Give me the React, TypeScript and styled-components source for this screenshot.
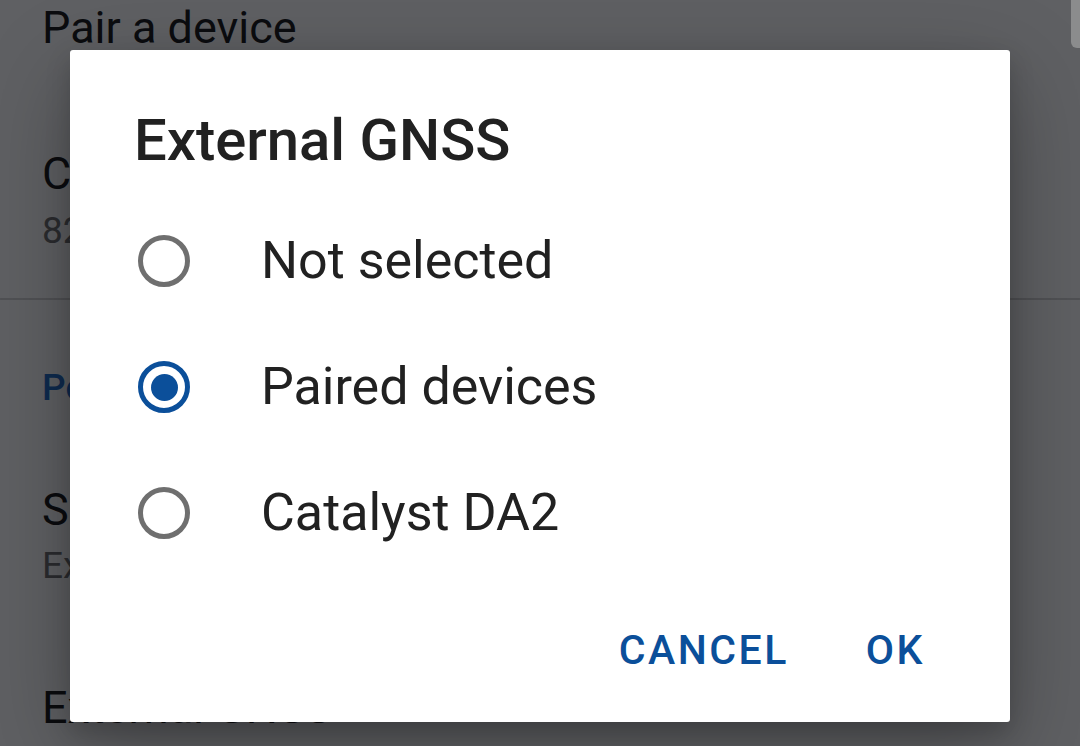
import styled, { createGlobalStyle } from 'styled-components'

const GlobalStyle = createGlobalStyle`
  html, body {
    margin: 0;
    padding: 0;
    width: 1080px;
    height: 746px;
    overflow: hidden;
    background: #ffffff;
    font-family: Roboto, 'Liberation Sans', sans-serif;
  }
`

const BLUE = '#0b4f9a'

const Screen = styled.div`
  position: relative;
  width: 1080px;
  height: 746px;
  overflow: hidden;
  background: #ffffff;
`

const SettingsList = styled.div`
  display: flex;
  flex-direction: column;
  padding: 3px 0 0 42px;
`

const PrefTitle = styled.div<{ $gap?: number }>`
  margin-top: ${(p) => p.$gap ?? 0}px;
  font-size: 45px;
  line-height: 50px;
  color: #1f1f1f;
  white-space: nowrap;
`

const PrefSummary = styled.div<{ $gap?: number }>`
  margin-top: ${(p) => p.$gap ?? 0}px;
  font-size: 37px;
  line-height: 42px;
  color: #757575;
  white-space: nowrap;
`

const CategoryHeader = styled.div`
  margin-top: 67px;
  font-size: 37px;
  line-height: 42px;
  font-weight: 500;
  color: #2a72c9;
`

const Divider = styled.div`
  margin: 46px 0 0 -42px;
  height: 2px;
  background: #d6d6d6;
`

const Scrim = styled.div`
  position: absolute;
  inset: 0;
  background: rgba(0, 2, 6, 0.626);
  display: flex;
  justify-content: center;
  align-items: flex-start;
  padding-top: 50px;
`

const ScrollThumb = styled.div`
  position: absolute;
  top: 0;
  right: 0;
  width: 9px;
  height: 48px;
  border-bottom-left-radius: 6px;
  background: #8b8c8d;
`

const Dialog = styled.div`
  width: 940px;
  height: 672px;
  box-sizing: border-box;
  background: #ffffff;
  border-radius: 3px;
  box-shadow: 0 28px 90px rgba(0, 0, 0, 0.28), 0 10px 24px rgba(0, 0, 0, 0.18);
  display: flex;
  flex-direction: column;
  padding-top: 55px;
`

const DialogTitle = styled.h2`
  margin: 0 0 23px 64px;
  font-size: 58px;
  line-height: 70px;
  font-weight: 500;
  color: #212121;
`

const Choice = styled.div`
  height: 126px;
  display: flex;
  align-items: center;
  padding-left: 68px;
`

const Radio = styled.span<{ $checked: boolean }>`
  position: relative;
  width: 52px;
  height: 52px;
  box-sizing: border-box;
  border-radius: 50%;
  border: 5.5px solid ${(p) => (p.$checked ? BLUE : '#6f6f6f')};
  flex-shrink: 0;

  &::after {
    content: '';
    display: ${(p) => (p.$checked ? 'block' : 'none')};
    position: absolute;
    left: 50%;
    top: 50%;
    width: 27px;
    height: 27px;
    margin: -13.5px 0 0 -13.5px;
    border-radius: 50%;
    background: ${BLUE};
  }
`

const ChoiceLabel = styled.span`
  margin-left: 71px;
  font-size: 52px;
  line-height: 62px;
  color: #212121;
  white-space: nowrap;
`

const ButtonBar = styled.div`
  margin-top: auto;
  display: flex;
  justify-content: flex-end;
  gap: 77px;
  padding: 0 85px 47px 0;
`

const TextButton = styled.button`
  border: none;
  background: none;
  padding: 0;
  font-family: inherit;
  font-size: 41px;
  line-height: 50px;
  font-weight: 500;
  letter-spacing: 2.5px;
  color: ${BLUE};
`

const options = [
  { label: 'Not selected', checked: false },
  { label: 'Paired devices', checked: true },
  { label: 'Catalyst DA2', checked: false },
]

export default function App() {
  return (
    <Screen>
      <GlobalStyle />
      <SettingsList>
        <PrefTitle>Pair a device</PrefTitle>
        <PrefTitle $gap={96}>Catalyst DA2</PrefTitle>
        <PrefSummary $gap={11}>8210534176</PrefSummary>
        <Divider />
        <CategoryHeader>Position</CategoryHeader>
        <PrefTitle $gap={76}>Source</PrefTitle>
        <PrefSummary $gap={10}>External GNSS receiver</PrefSummary>
        <PrefTitle $gap={96}>External GNSS</PrefTitle>
      </SettingsList>
      <Scrim>
        <ScrollThumb />
        <Dialog>
          <DialogTitle>External GNSS</DialogTitle>
          {options.map((o) => (
            <Choice key={o.label}>
              <Radio $checked={o.checked} />
              <ChoiceLabel>{o.label}</ChoiceLabel>
            </Choice>
          ))}
          <ButtonBar>
            <TextButton>CANCEL</TextButton>
            <TextButton>OK</TextButton>
          </ButtonBar>
        </Dialog>
      </Scrim>
    </Screen>
  )
}
